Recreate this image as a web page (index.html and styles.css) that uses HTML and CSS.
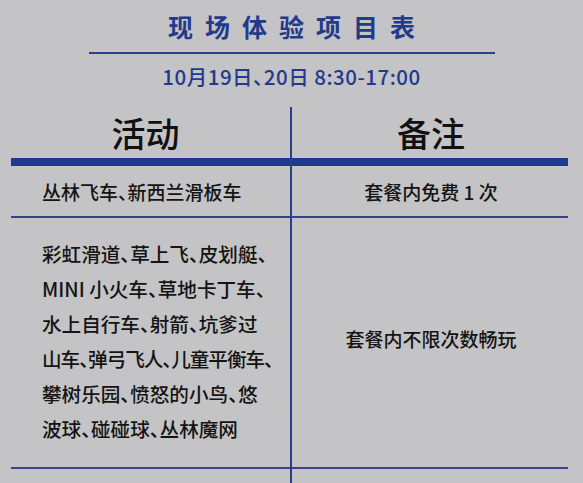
FILE: index.html
```html
<!DOCTYPE html>
<html lang="zh-CN">
<head>
<meta charset="utf-8">
<link rel="stylesheet" href="styles.css">
</head>
<body>
<div class="page">
  <header class="header">
    <h1 class="title">现场体验项目表</h1>
    <div class="rule"></div>
    <div class="date">10月19日、20日 8:30-17:00</div>
  </header>
  <div class="table">
    <div class="row head">
      <div class="cell left center">活动</div>
      <div class="cell right">备注</div>
    </div>
    <div class="row r1">
      <div class="cell left">丛林飞车、新西兰滑板车</div>
      <div class="cell right">套餐内免费 1 次</div>
    </div>
    <div class="row r2">
      <div class="cell left multi">彩虹滑道、草上飞、皮划艇、<br>MINI 小火车、草地卡丁车、<br>水上自行车、射箭、坑爹过<br><span class="tight">山车、弹弓飞人、儿童平衡车、</span><br>攀树乐园、愤怒的小鸟、悠<br>波球、碰碰球、丛林魔网</div>
      <div class="cell right">套餐内不限次数畅玩</div>
    </div>
    <div class="row tail"></div>
  </div>
</div>
</body>
</html>
```
FILE: styles.css
```css
html, body {
  margin: 0;
  padding: 0;
  background: #c4c4c6;
}
body {
  width: 583px;
  height: 483px;
  overflow: hidden;
  font-family: "Noto Sans CJK SC", "Noto Sans", sans-serif;
  font-feature-settings: "halt";
  color: #141414;
}
.page {
  display: flex;
  flex-direction: column;
}
.header {
  display: flex;
  flex-direction: column;
  align-items: center;
  padding-top: 14px;
}
.title {
  margin: 0;
  font-size: 25px;
  line-height: 24px;
  font-weight: 700;
  color: #233a8c;
  letter-spacing: 12px;
  padding-left: 12px;
  font-feature-settings: normal;
}
.rule {
  width: 406px;
  height: 2px;
  background: #2c3f8c;
  margin-top: 14px;
}
.date {
  margin-top: 12px;
  font-size: 20.5px;
  line-height: 20px;
  letter-spacing: 0.5px;
  font-weight: 500;
  color: #233a8c;
}
.table {
  position: relative;
  margin: 21px 15px 0 11px;
}
.table::before {
  content: "";
  position: absolute;
  left: 279px;
  top: 0;
  bottom: 0;
  width: 2px;
  background: #2a3c8e;
}
.row {
  display: grid;
  grid-template-columns: 279px 1fr;
}
.cell {
  display: flex;
  align-items: center;
}
.left {
  padding-left: 31px;
}
.left.center {
  padding-left: 0;
  justify-content: center;
  padding-right: 10px;
}
.right {
  justify-content: center;
  padding-left: 4px;
}
.head {
  height: 51px;
  border-bottom: 8px solid #1f3990;
  font-size: 34px;
  font-weight: 500;
  color: #111;
}
.r1 {
  height: 50px;
  border-bottom: 2px solid #34408c;
  font-size: 19px;
  font-weight: 500;
}
.r2 {
  height: 249px;
  border-bottom: 2px solid #3d418a;
  font-size: 19.6px;
  font-weight: 500;
}
.multi {
  display: block;
  align-self: center;
  line-height: 35px;
  padding-bottom: 4px;
  white-space: nowrap;
}
.tight {
  letter-spacing: -1px;
}
.r2 .right {
  font-size: 19px;
  padding-bottom: 8px;
}
.tail {
  height: 20px;
}
```
